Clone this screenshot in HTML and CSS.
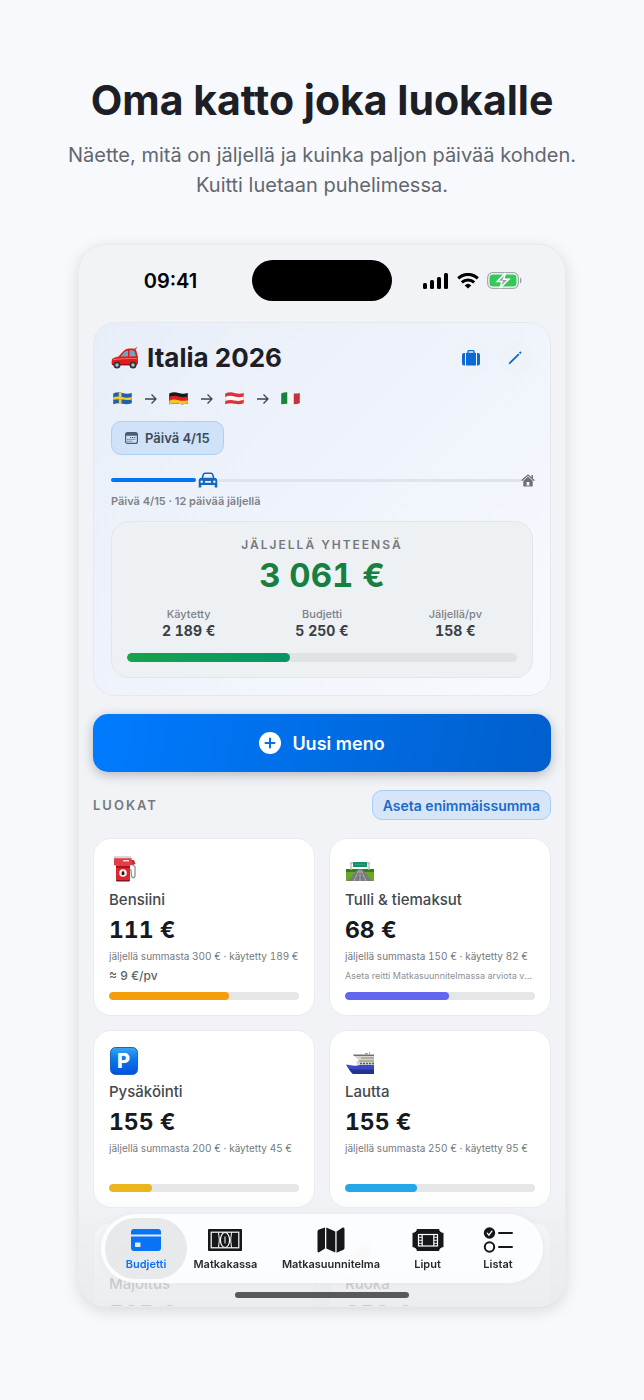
FILE: index.html
```html
<!DOCTYPE html>
<html lang="fi">

<head>
    <meta charset="UTF-8">
    <meta name="viewport" content="width=device-width, initial-scale=1.0">
    <title>Oma katto joka luokalle</title>
    <link rel="stylesheet" href="styles.css">
</head>

<body>
    <header class="intro">
        <h1>Oma katto joka luokalle</h1>
        <p>Näette, mitä on jäljellä ja kuinka paljon päivää kohden. Kuitti luetaan puhelimessa.</p>
    </header>

    <main class="phone">
        <div class="status">
            <span class="time">09:41</span>
            <span class="island"></span>
            <span class="signals">
                <svg width="26" height="16" viewBox="0 0 26 16">
                    <rect x="0" y="10" width="4" height="6" rx="1.500" />
                    <rect x="7" y="7" width="4" height="9" rx="1.500" />
                    <rect x="14" y="4" width="4" height="12" rx="1.500" />
                    <rect x="21" y="0" width="4" height="16" rx="1.500" />
                </svg>
                <svg width="22" height="16" viewBox="0 0 22 16" fill="none" stroke="#000" stroke-width="3">
                    <path d="M1.2 5.4a14 14 0 0 1 19.6 0" />
                    <path d="M4.8 9.4a9 9 0 0 1 12.4 0" />
                    <path d="M11 15.6l-3.3-3.2a4.8 4.8 0 0 1 6.6 0z" fill="#000" stroke="none" />
                </svg>
                <svg width="35" height="17" viewBox="0 0 35 17">
                    <rect x=".7" y=".7" width="30.600" height="15.600" rx="5" fill="#fff" stroke="#a5a9ab" stroke-width="1.300" />
                    <rect x="2.500" y="2.500" width="27" height="12" rx="3.300" fill="#34c759" />
                    <path d="M33 5.500v6c2-.8 2-5.200 0-6z" fill="#9a9da0" />
                    <path d="M18.500 1L10 9.600h5L13 16l9-8.800h-5.300z" fill="#a0a4a4" stroke="#fff" stroke-width="1.500" />
                </svg>
            </span>
        </div>

        <div class="content">
            <section class="trip">
                <div class="trip-head">
                    <svg class="car-emoji" width="28" height="22" viewBox="0 0 28 22">
                        <path d="M1 12q2-2 6.500-2.500L12 4.500q2.500-3 6-3h4.500q2.500 0 3 3l1.500 6v6l-2 2H2.500Q.5 18 .5 16z" fill="#e5191c" />
                        <path d="M9.500 9.500L13.500 5Q15 3.500 17 3.500v6zM18.500 3.300h3q1.700 0 2.200 1.500l1.300 4.400-6.500.3z" fill="#69a9bd" />
                        <path d="M2 12q10-1.500 24-1v1Q14 11.500 2 13.300z" fill="#ff6257" />
                        <path d="M24 2l2-1.500" stroke="#e5191c" />
                        <path d="M1 17h25v1H1z" fill="#9f0d12" />
                        <circle cx="6" cy="18" r="3.500" fill="#30353a" />
                        <circle cx="6" cy="18" r="1.700" fill="#b9c0c4" />
                        <circle cx="22" cy="18" r="3.500" fill="#30353a" />
                        <circle cx="22" cy="18" r="1.700" fill="#b9c0c4" />
                    </svg>
                    <h2>Italia 2026</h2>
                    <button class="round" aria-label="Matkatavarat">
                        <svg width="18" height="16" viewBox="0 0 18 16" fill="#0b69d4">
                            <path d="M6 3V1.800Q6 .5 7.300.5h3.400q1.300 0 1.300 1.300V3" fill="none" stroke="#0b69d4" stroke-width="1.300" />
                            <rect x="4" y="2.700" width="10" height="12.800" rx=".6" />
                            <path d="M3 3v12.400H2q-2 0-2-2V5q0-2 2-2zM15 3v12.400h1q2 0 2-2V5q0-2-2-2z" />
                        </svg>
                    </button>
                    <button class="round" aria-label="Muokkaa">
                        <svg width="14" height="14" viewBox="0 0 14 14" fill="#0b69d4">
                            <path d="M10.200 2.400L11.500 3.700 2.600 12.600.5 13.500 1.300 11.300zM10.900 1.700l.9-.9q.6-.5 1.200 0l.2.200q.5.600 0 1.200l-.9.900z" />
                        </svg>
                    </button>
                </div>

                <div class="route">
                    <svg class="flag" viewBox="0 0 20 14">
                        <path d="M0 1.500Q5-.5 10 1t10 0v11q-5 2-10 .7t-10 .6z" fill="#1f61a5" />
                        <path d="M6 .5h3v12.300H6zM0 5.700q5-1.500 10-.2t10-.2V8q-5 1.300-10 .2t-10 .2z" fill="#f4cb32" />
                    </svg>
                    <svg class="arrow" viewBox="0 0 13 12"><path d="M1 6h11M7.500 1.500L12 6l-4.500 4.500" /></svg>
                    <svg class="flag" viewBox="0 0 20 14">
                        <path d="M0 1.500Q5-.5 10 1t10 0v11q-5 2-10 .7t-10 .6z" fill="#17191b" />
                        <path d="M0 5.300q5-2 10-.5t10 0V12q-5 2-10 .7t-10 .6z" fill="#df1f26" />
                        <path d="M0 9.300q5-2 10-.5t10 0V12q-5 2-10 .7t-10 .6z" fill="#f5c523" />
                    </svg>
                    <svg class="arrow" viewBox="0 0 13 12"><path d="M1 6h11M7.500 1.500L12 6l-4.500 4.500" /></svg>
                    <svg class="flag" viewBox="0 0 20 14">
                        <path d="M0 1.500Q5-.5 10 1t10 0v11q-5 2-10 .7t-10 .6z" fill="#df3139" />
                        <path d="M0 5.300q5-2 10-.5t10 0v3.600q-5 2-10 .7t-10 .6z" fill="#f7f7f5" />
                    </svg>
                    <svg class="arrow" viewBox="0 0 13 12"><path d="M1 6h11M7.500 1.500L12 6l-4.500 4.500" /></svg>
                    <svg class="flag" viewBox="0 0 20 14">
                        <path d="M0 1.500Q5-.5 10 1t10 0v11q-5 2-10 .7t-10 .6z" fill="#f7f7f5" />
                        <path d="M0 1.500Q3 .3 6.500.4v12.400q-3-.1-6.500.5z" fill="#16823f" />
                        <path d="M13.500 1.600Q17 1.800 20 1v11q-3 1.200-6.500 1.200z" fill="#c8303d" />
                    </svg>
                </div>

                <div class="day">
                    <svg width="13" height="12" viewBox="0 0 13 12">
                        <rect x=".6" y=".6" width="11.800" height="10.800" rx="2" fill="none" stroke="#4d5d6f" stroke-width="1.200" />
                        <path d="M.6 3.700V2.500Q.6.600 2.500.600h8q1.900 0 1.900 1.900v1.200z" fill="#4d5d6f" />
                        <path d="M5 5.500h6M2.300 7.300h8.400M2.300 9.200h5" stroke="#4d5d6f" stroke-dasharray="1.200 .8" />
                    </svg>
                    Päivä 4/15
                </div>

                <div class="journey">
                    <div class="track">
                        <span class="done" style="width: 20%"></span>
                        <svg width="20" height="16" viewBox="0 0 20 16" fill="#1967bd">
                            <path fill-rule="evenodd" d="M3.500 6L4.700 2Q5.200.5 7 .5h6q1.800 0 2.300 1.500l1.200 4H18q1.300 1 1.300 2.500v7h-2.600V13H3.300v2.500H.7v-7Q.7 7 2 6zM5.200 5.700h9.600l-1-3.300q-.2-.5-.8-.5H7q-.6 0-.8.5zM3.700 10.900a1.200 1.200 0 1 0 0-2.400 1.200 1.200 0 0 0 0 2.400zm12.600 0a1.200 1.200 0 1 0 0-2.400 1.200 1.200 0 0 0 0 2.400zM7 9v1.700h6V9z" />
                        </svg>
                        <span class="left"></span>
                        <svg width="14" height="13" viewBox="0 0 14 13" fill="#6c7075">
                            <path d="M1 6.300L7 1l6 5.300" fill="none" stroke="#6c7075" stroke-width="1.300" stroke-linecap="round" />
                            <path d="M10.500 1h1.500v3.500l-1.500-1.300z" />
                            <path fill-rule="evenodd" d="M2.300 6.800L7 2.800l4.700 4v5q0 .7-.7.700H3q-.7 0-.7-.7zM5.600 11.500h2.800V8H5.600z" />
                        </svg>
                    </div>
                    <p>Päivä 4/15 · 12 päivää jäljellä</p>
                </div>

                <div class="summary">
                    <h3>Jäljellä yhteensä</h3>
                    <p class="total">3 061 €</p>
                    <dl class="stats">
                        <div>
                            <dt>Käytetty</dt>
                            <dd>2 189 €</dd>
                        </div>
                        <div>
                            <dt>Budjetti</dt>
                            <dd>5 250 €</dd>
                        </div>
                        <div>
                            <dt>Jäljellä/pv</dt>
                            <dd>158 €</dd>
                        </div>
                    </dl>
                    <div class="bar big"><span class="green" style="width: 41.7%"></span></div>
                </div>
            </section>

            <button class="new-expense">
                <svg width="22" height="22" viewBox="0 0 22 22">
                    <circle cx="11" cy="11" r="11" fill="#fff" />
                    <path d="M11 6.500v9M6.500 11h9" stroke="#0070ee" stroke-width="2" stroke-linecap="round" />
                </svg>
                Uusi meno
            </button>

            <div class="section-head">
                <h3>Luokat</h3>
                <button class="set-limit">Aseta enimmäissumma</button>
            </div>

            <section class="categories">
                <article class="category">
                    <svg class="emoji" viewBox="0 0 30 30">
                        <path d="M22 8q2 4 4 4.500V22q-1 3-3 1-1-2-1-8" fill="none" stroke="#85898d" stroke-width="1.200" />
                        <path d="M5 2h17l1 9H5zM7 11h14v16H7z" fill="#db2732" />
                        <path d="M5 2h17v2.500H5z" fill="#d9dadd" />
                        <path d="M5 4.500h17.500V11L20 12H8l-3-1z" fill="#e63c45" />
                        <path d="M14 6h6v1.500h-6z" fill="#ffd6d5" />
                        <path d="M7 12h14v2H7z" fill="#a9121f" />
                        <circle cx="14" cy="19" r="3.800" fill="#f5f1ef" />
                        <path d="M14 16.500q3 4 0 4.800-3-.8 0-4.800z" fill="#17191c" />
                        <path d="M7.500 26h13v1.500h-13z" fill="#7b1720" />
                        <path d="M22 6h3l1.500 4-3 1z" fill="#cd2832" />
                    </svg>
                    <h4>Bensiini</h4>
                    <p class="amount">111 €</p>
                    <p class="detail">jäljellä summasta 300 € · käytetty 189 €</p>
                    <p class="rate">≈ 9 €/pv</p>
                    <div class="bar"><span class="orange" style="width: 63%"></span></div>
                </article>

                <article class="category">
                    <svg class="emoji" viewBox="0 0 30 30">
                        <path d="M1 15h28v12H1z" fill="#69a729" />
                        <path d="M1 15h28v3H1z" fill="#397b20" />
                        <path d="M13 15h4l10 12H3z" fill="#7a7b80" />
                        <path d="M15 16v11M13.500 17L9 27M16.500 17L21 27" stroke="#c7c8c9" stroke-width=".8" stroke-dasharray="3 1" />
                        <path d="M6 9v7M24 9v7M5 9h20" stroke="#b4babc" stroke-width="1.300" />
                        <path d="M8 8h14v5H8z" fill="#159068" />
                        <path d="M10 10.500h10" stroke="#2f9f7c" />
                    </svg>
                    <h4>Tulli &amp; tiemaksut</h4>
                    <p class="amount">68 €</p>
                    <p class="detail">jäljellä summasta 150 € · käytetty 82 €</p>
                    <p class="rate hint">Aseta reitti Matkasuunnitelmassa arviota varten</p>
                    <div class="bar"><span class="violet" style="width: 54.7%"></span></div>
                </article>

                <article class="category">
                    <svg class="emoji" viewBox="0 0 30 30">
                        <defs>
                            <linearGradient id="parking" x2="0" y2="1">
                                <stop stop-color="#3ba5f1" />
                                <stop offset=".4" stop-color="#0d7ae8" />
                                <stop offset="1" stop-color="#0050df" />
                            </linearGradient>
                        </defs>
                        <rect x="1.500" y="1.500" width="27" height="27" rx="5" fill="url(#parking)" stroke="#1668bd" />
                        <text x="8" y="22" class="parking-letter">P</text>
                    </svg>
                    <h4>Pysäköinti</h4>
                    <p class="amount">155 €</p>
                    <p class="detail">jäljellä summasta 200 € · käytetty 45 €</p>
                    <p class="rate"></p>
                    <div class="bar"><span class="yellow" style="width: 22.5%"></span></div>
                </article>

                <article class="category">
                    <svg class="emoji" viewBox="0 0 30 30">
                        <path d="M8 9h21v10H13l-2-3 3-2z" fill="#d7d5c9" />
                        <path d="M8 8.500h21v1.500H9z" fill="#70706b" />
                        <path d="M20 7h3v2h-3zM24 6h1v3h-1z" fill="#a9aba3" />
                        <path d="M16 12h13M14 15h15" stroke="#85887f" stroke-width="1.200" />
                        <path d="M15 17.500h14" stroke="#536273" stroke-width="1.500" stroke-dasharray="2 1" />
                        <path d="M1 18.500q8 2 14 .5h14v9H8q-3-2-7-9.500z" fill="#3b48c5" />
                        <path d="M4 23q8 1 25 .5V28H8z" fill="#24308e" />
                    </svg>
                    <h4>Lautta</h4>
                    <p class="amount">155 €</p>
                    <p class="detail">jäljellä summasta 250 € · käytetty 95 €</p>
                    <p class="rate"></p>
                    <div class="bar"><span class="blue" style="width: 38%"></span></div>
                </article>

                <article class="category">
                    <svg class="emoji" viewBox="0 0 30 30">
                        <path d="M2 14L15 4l13 10v14H2z" fill="#f28a3c" />
                    </svg>
                    <h4>Majoitus</h4>
                    <p class="amount">565 €</p>
                </article>

                <article class="category">
                    <svg class="emoji" viewBox="0 0 30 30">
                        <path d="M2 16L24 5v21z" fill="#f28a3c" />
                    </svg>
                    <h4>Ruoka</h4>
                    <p class="amount">358 €</p>
                </article>
            </section>
        </div>

        <div class="dock">
            <nav class="tabs">
                <a href="#budjetti" class="tab active">
                    <svg width="30" height="26" viewBox="0 0 30 26" fill="#0874f5">
                        <path d="M0 7.500V5q0-3 3-3h24q3 0 3 3v2.500z" />
                        <path fill-rule="evenodd" d="M0 9.500h30V21q0 3-3 3H3q-3 0-3-3zM4.500 15.500q-.5 0-.5.500v3.500q0 .5.500.5H9q.5 0 .5-.5V16q0-.5-.5-.5z" />
                    </svg>
                    <span>Budjetti</span>
                </a>
                <a href="#matkakassa" class="tab">
                    <svg width="34" height="26" viewBox="0 0 34 26">
                        <rect x="0" y="2" width="34" height="22" rx="1" fill="#15171a" />
                        <rect x="3.200" y="5.200" width="27.600" height="15.600" fill="none" stroke="#fff" stroke-width="1.200" />
                        <path d="M10.500 5.500q1.700 7.500 0 15M23.500 5.500q-1.700 7.500 0 15" fill="none" stroke="#fff" stroke-width="1" />
                        <ellipse cx="17" cy="13" rx="4.600" ry="7.500" fill="#15171a" stroke="#fff" stroke-width="1.200" />
                        <path d="M17 9.500v7" stroke="#fff" stroke-width="1" />
                    </svg>
                    <span>Matkakassa</span>
                </a>
                <a href="#matkasuunnitelma" class="tab">
                    <svg width="28" height="26" viewBox="0 0 28 26" fill="#15171a">
                        <path d="M.5 4.500Q.5 3 2 2.500L8 .5v21l-6 3.800q-1.500.4-1.500-1.300zM9.300.5l9 4v21l-9-4zM19.600 4.500l6.200-4Q27.500 0 27.500 2v19q0 1.200-1 1.700l-6.900 3z" />
                    </svg>
                    <span>Matkasuunnitelma</span>
                </a>
                <a href="#liput" class="tab">
                    <svg width="32" height="26" viewBox="0 0 32 26">
                        <path d="M5 2h22q.5 3.500 4.500 4v14q-4 .5-4.500 4H5q-.5-3.500-4.500-4V6Q4.500 5.500 5 2z" fill="#15171a" />
                        <rect x="6.500" y="7.500" width="19" height="11.500" fill="none" stroke="#fff" stroke-width="1.200" />
                        <path d="M10.200 7.500V19M21.800 7.500V19" stroke="#fff" stroke-width="1.200" />
                        <path d="M6.500 10.300h3.700m-3.700 3h3.700m-3.700 3h3.700m11.600-6h3.700m-3.700 3h3.700m-3.700 3h3.700" stroke="#fff" stroke-width=".9" />
                    </svg>
                    <span>Liput</span>
                </a>
                <a href="#listat" class="tab">
                    <svg width="30" height="26" viewBox="0 0 30 26" fill="none" stroke="#15171a" stroke-width="2" stroke-linecap="round">
                        <circle cx="6.500" cy="6" r="4.700" fill="#15171a" />
                        <path d="M4.300 6.200l1.600 1.900 3-4" stroke="#fff" stroke-width="1.300" />
                        <path d="M16 6h13M16 20h13" />
                        <circle cx="6.500" cy="20" r="4.700" />
                    </svg>
                    <span>Listat</span>
                </a>
            </nav>
            <div class="home-indicator"></div>
        </div>
    </main>
</body>

</html>
```
FILE: styles.css
```css
* {
    box-sizing: border-box;
    margin: 0;
    padding: 0;
}

body {
    min-height: 100vh;
    padding-bottom: 90px;
    background-color: #f7f9fc;
    color: #1c2026;
    font-family: Inter, "Liberation Sans", sans-serif;
}

button {
    border: none;
    font-family: inherit;
    cursor: pointer;
}

svg {
    display: block;
    flex-shrink: 0;
}

.intro {
    padding: 74px 60px 44px;
    text-align: center;
}

.intro h1 {
    font-size: 41px;
    line-height: 52px;
    font-weight: 700;
    margin-bottom: 14px;
}

.intro p {
    color: #62676f;
    font-size: 20px;
    line-height: 30px;
}

.phone {
    position: relative;
    aspect-ratio: 488 / 1063;
    margin: 0 78px;
    overflow: hidden;
    background-color: #f1f3f7;
    border: 1px solid #e9ebed;
    border-radius: 28px;
    box-shadow: 0 4px 16px rgba(0, 0, 0, 0.13);
}

/* status bar */
.status {
    display: grid;
    grid-template-columns: 1fr 140px 1fr;
    align-items: center;
    justify-items: center;
    padding: 15px 0 21px;
    color: #000;
}

.time {
    font-size: 20px;
    font-weight: 600;
    padding-left: 10px;
}

.island {
    width: 140px;
    height: 41px;
    border-radius: 21px;
    background-color: #000;
}

.signals {
    display: flex;
    align-items: center;
    gap: 8px;
    padding-right: 12px;
}

.content {
    display: flex;
    flex-direction: column;
    gap: 18px;
    padding: 0 14px;
}

/* trip card */
.trip {
    display: flex;
    flex-direction: column;
    gap: 12px;
    padding: 17px;
    border: 1px solid #e5e9ee;
    border-radius: 22px;
    background: linear-gradient(135deg, #e8eef7, #eff4fc 50%, #f7fafd);
}

.trip-head {
    display: flex;
    align-items: center;
    gap: 8px;
}

.trip-head h2 {
    flex: 1;
    font-size: 26px;
    line-height: 36px;
    font-weight: 700;
}

.round {
    display: flex;
    align-items: center;
    justify-content: center;
    width: 36px;
    height: 36px;
    border-radius: 50%;
    background-color: #eef3f9;
}

.route {
    display: flex;
    align-items: center;
    gap: 12px;
    height: 21px;
    padding-left: 2px;
}

.flag {
    width: 19px;
    height: 13px;
}

.arrow {
    width: 13px;
    height: 12px;
    fill: none;
    stroke: #3f444b;
    stroke-width: 1.3;
}

.day {
    display: flex;
    align-items: center;
    align-self: flex-start;
    gap: 7px;
    height: 34px;
    padding: 0 13px;
    border: 1px solid #a9d0f7;
    border-radius: 10px;
    background-color: #d0e2f8;
    color: #3d4a59;
    font-size: 13px;
    font-weight: 600;
}

.track {
    display: flex;
    align-items: center;
    height: 26px;
    margin-right: -2px;
}

.done {
    height: 4px;
    margin-right: 2px;
    border-radius: 2px;
    background-color: #0075f3;
}

.left {
    flex: 1;
    height: 3px;
    background-color: #e0e4ea;
}

.journey p {
    color: #7d8289;
    font-size: 11px;
    line-height: 16px;
    font-weight: 600;
}

.summary {
    padding: 15px;
    border: 1px solid #e2e6ea;
    border-radius: 18px;
    background-color: #edf1f4;
    text-align: center;
}

.summary h3,
.section-head h3 {
    color: #74797f;
    font-size: 12px;
    line-height: 16px;
    font-weight: 600;
    letter-spacing: 2px;
    text-transform: uppercase;
}

.section-head h3 {
    font-size: 13px;
}

.total {
    margin: 3px 0 13px;
    color: #178040;
    font-size: 33px;
    line-height: 38px;
    font-weight: 700;
    font-variant-numeric: tabular-nums;
}

.stats {
    display: grid;
    grid-template-columns: repeat(3, 1fr);
    gap: 10px;
    margin-bottom: 13px;
}

.stats dt {
    color: #7c8187;
    font-size: 11px;
    line-height: 15px;
    font-weight: 500;
}

.stats dd {
    color: #3c4045;
    font-size: 14px;
    line-height: 18px;
    font-weight: 700;
    font-variant-numeric: tabular-nums;
}

.bar {
    height: 8px;
    border-radius: 4px;
    background-color: #e4e6e8;
    overflow: hidden;
}

.bar.big {
    height: 9px;
    border-radius: 5px;
    background-color: #e0e3e5;
}

.bar span {
    display: block;
    height: 100%;
    border-radius: 5px;
}

.green {
    background: linear-gradient(90deg, #16a34a, #059669);
}

.orange {
    background-color: #f59e0b;
}

.violet {
    background-color: #6366f1;
}

.yellow {
    background-color: #eab61d;
}

.blue {
    background-color: #23a6ea;
}

/* new expense */
.new-expense {
    display: flex;
    align-items: center;
    justify-content: center;
    gap: 11px;
    height: 58px;
    border-radius: 15px;
    background: linear-gradient(100deg, #007bff, #005fcc);
    box-shadow: 0 3px 12px rgba(0, 0, 0, 0.25);
    color: #fff;
    font-size: 18px;
    font-weight: 600;
}

.section-head {
    display: flex;
    align-items: center;
    justify-content: space-between;
}

.set-limit {
    height: 30px;
    padding: 0 10px;
    border: 1px solid #a5cdf7;
    border-radius: 10px;
    background-color: #d6e5f8;
    color: #1a6acb;
    font-size: 14px;
    font-weight: 600;
}

/* categories */
.categories {
    display: grid;
    grid-template-columns: repeat(2, minmax(0, 1fr));
    gap: 14px;
}

.category {
    height: 178px;
    padding: 15px;
    border: 1px solid #e9ebef;
    border-radius: 18px;
    background-color: #fff;
}

.emoji {
    width: 30px;
    height: 30px;
}

.parking-letter {
    fill: #fff;
    font-size: 20px;
    font-weight: 800;
}

.category h4 {
    margin-top: 6px;
    color: #44484e;
    font-size: 15px;
    line-height: 20px;
    font-weight: 500;
}

.amount {
    margin: 6px 0 5px;
    color: #17191d;
    font-size: 23px;
    line-height: 28px;
    font-weight: 700;
    font-variant-numeric: tabular-nums;
}

.detail {
    color: #75797e;
    font-size: 10px;
    line-height: 14px;
    font-variant-numeric: tabular-nums;
    white-space: nowrap;
}

.rate {
    height: 16px;
    margin: 5px 0 8px;
    color: #5b5f64;
    font-size: 12px;
    line-height: 16px;
    font-weight: 500;
}

.hint {
    color: #8d9095;
    font-size: 9px;
    font-weight: 400;
    white-space: nowrap;
    overflow: hidden;
    text-overflow: ellipsis;
}

/* floating tab bar */
.dock {
    position: absolute;
    left: 0;
    right: 0;
    bottom: 0;
    padding: 20px 22px 8px;
    background: linear-gradient(rgba(236, 238, 240, 0), rgba(235, 237, 239, 0.7) 40%, rgba(232, 234, 236, 0.85));
}

.tabs {
    display: flex;
    justify-content: space-between;
    padding: 4px 10px;
    border-radius: 35px;
    background-color: rgba(253, 254, 255, 0.88);
    box-shadow: 0 0 8px rgba(0, 0, 0, 0.04);
    backdrop-filter: blur(2px);
}

.tab {
    position: relative;
    display: flex;
    flex-direction: column;
    align-items: center;
    gap: 4px;
    min-width: 70px;
    height: 61px;
    padding: 9px 12px 0;
    color: #26292d;
    font-size: 11px;
    line-height: 14px;
    font-weight: 600;
    text-decoration: none;
}

.tab svg,
.tab span {
    position: relative;
}

.active {
    color: #0874f5;
}

.active::before {
    content: "";
    position: absolute;
    inset: 0 -6px;
    border-radius: 31px;
    background-color: rgba(222, 224, 226, 0.7);
}

.home-indicator {
    width: 174px;
    height: 6px;
    margin: 9px auto 0;
    border-radius: 3px;
    background-color: #59595b;
}
```
